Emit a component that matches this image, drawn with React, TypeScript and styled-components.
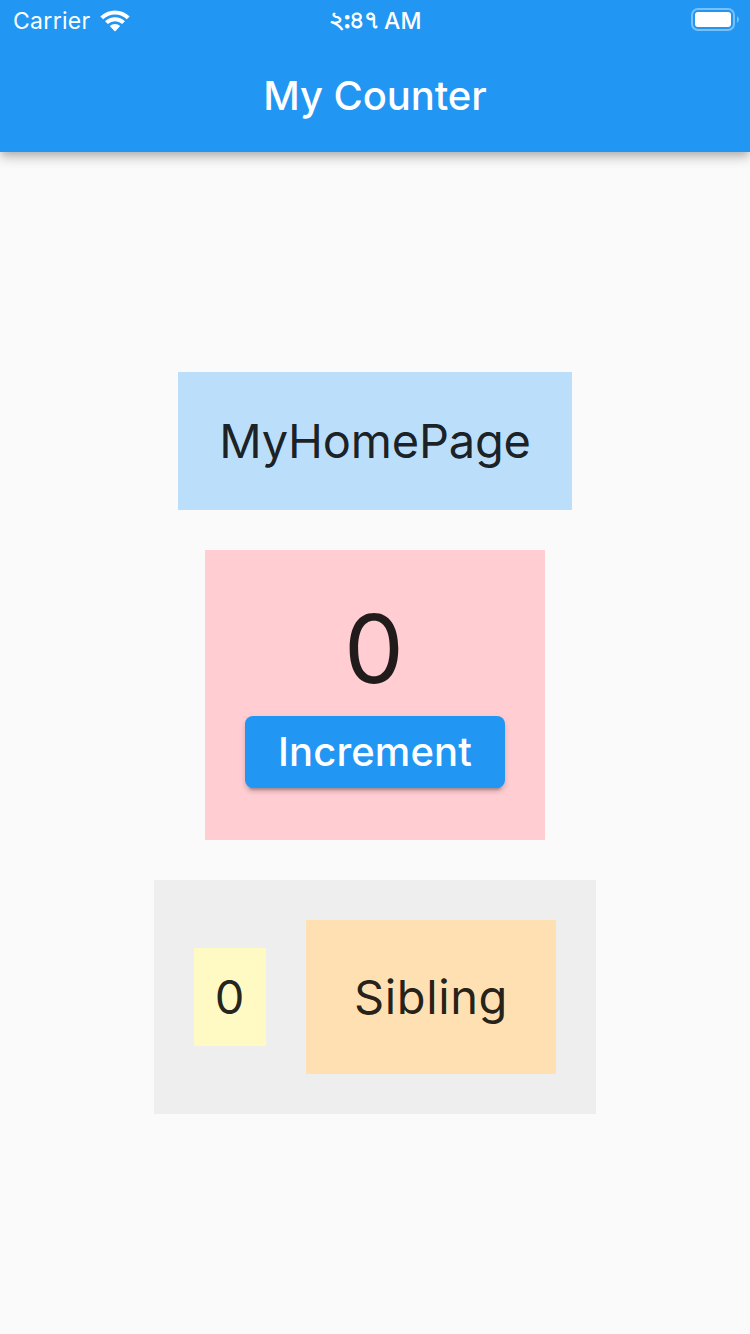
import React, { useState } from "react";
import styled, { createGlobalStyle } from "styled-components";

const GlobalStyle = createGlobalStyle`
  * { box-sizing: border-box; }
  body {
    margin: 0;
    background: #fafafa;
    color: rgba(0, 0, 0, 0.87);
    font-family: Inter, "Noto Sans", sans-serif;
  }
`;

const Screen = styled.div`
  display: flex;
  flex-direction: column;
  height: 1334px;
  width: 750px;
  overflow: hidden;
`;

const Header = styled.header`
  flex: none;
  height: 152px;
  background: #2196f3;
  color: #fff;
  box-shadow: 0 4px 8px -2px rgba(0, 0, 0, 0.2), 0 8px 10px rgba(0, 0, 0, 0.1),
    0 2px 16px rgba(0, 0, 0, 0.08);
`;

const StatusBar = styled.div`
  display: grid;
  grid-template-columns: 1fr auto 1fr;
  align-items: center;
  height: 40px;
  padding: 0 10px 0 13px;
`;

const Carrier = styled.div`
  display: flex;
  align-items: center;
  gap: 9px;
  font-size: 23px;
  line-height: 38px;
  letter-spacing: 0.3px;
  padding-top: 1px;
`;

const Clock = styled.time`
  display: flex;
  align-items: center;
  gap: 5px;
  padding-top: 2px;
  margin-right: 3px;
  font-size: 23px;
  line-height: 38px;
  font-weight: 530;
`;

const Digits = styled.span`
  font-size: 24px;
  line-height: 30px;
  padding-bottom: 2px;
  letter-spacing: -1.2px;
  -webkit-text-stroke: 0.9px #fff;
`;

const Battery = styled.svg`
  justify-self: end;
`;

const Title = styled.h1`
  margin: 0;
  height: 112px;
  line-height: 112px;
  text-align: center;
  font-size: 40px;
  font-weight: 550;
  letter-spacing: -0.1px;
`;

const Content = styled.main`
  flex: 1;
  display: flex;
  flex-direction: column;
  align-items: center;
  gap: 40px;
  padding-top: 220px;
`;

const Panel = styled.section<{ $color: string; $width: number; $height: number }>`
  display: flex;
  align-items: center;
  justify-content: center;
  width: ${(p) => p.$width}px;
  height: ${(p) => p.$height}px;
  background: ${(p) => p.$color};
`;

const CounterPanel = styled(Panel)`
  flex-direction: column;
  justify-content: flex-start;
  padding-top: 41px;
`;

const SiblingPanel = styled(Panel)`
  gap: 40px;
`;

const Label = styled.span<{ $spacing?: number }>`
  font-size: 47px;
  font-weight: 370;
  line-height: 58px;
  letter-spacing: ${(p) => p.$spacing ?? 0}px;
`;

const Count = styled.output`
  padding-right: 2px;
  font-size: 95px;
  font-weight: 370;
  line-height: 116px;
`;

const Button = styled.button`
  width: 260px;
  height: 72px;
  margin-top: 9px;
  padding: 0;
  border: 0;
  border-radius: 8px;
  background: #2196f3;
  color: #fff;
  font-family: Inter, sans-serif;
  font-size: 40px;
  font-weight: 550;
  line-height: 72px;
  letter-spacing: 0.1px;
  box-shadow: 0 6px 2px -4px rgba(0, 0, 0, 0.2), 0 4px 4px rgba(0, 0, 0, 0.12),
    0 2px 8px rgba(0, 0, 0, 0.06);
`;

export default function App() {
  const [count, setCount] = useState(0);
  return (
    <Screen>
      <GlobalStyle />
      <Header>
        <StatusBar>
          <Carrier>
            <span>Carrier</span>
            <svg width="30" height="22" viewBox="0 0 30 22" fill="#fff">
              <path d="M0.300 6.400Q6.500 0.400 15 0.400T29.700 6.400L26.800 9.300Q21.800 4.600 15 4.600T3.200 9.300Z" />
              <path d="M5 11.200Q9.300 7.200 15 7.200T25 11.200L22.100 14.100Q19 11.300 15 11.300T7.900 14.100Z" />
              <path d="M9.800 16.100Q12 14.100 15 14.100T20.200 16.100L15.600 20.900Q15 21.500 14.400 20.900Z" />
            </svg>
          </Carrier>
          <Clock>
            <Digits>২:৪৭</Digits>
            <span>AM</span>
          </Clock>
          <Battery width="49" height="24" viewBox="0 0 49 24" fill="none">
            <rect x="1" y="1" width="42" height="21" rx="6" stroke="#fff" strokeOpacity="0.4" strokeWidth="2" />
            <rect x="4" y="4" width="36" height="15" rx="3" fill="#fff" />
            <path d="M46 8Q50 11.500 46 15Z" fill="#fff" fillOpacity="0.4" />
          </Battery>
        </StatusBar>
        <Title>My Counter</Title>
      </Header>
      <Content>
        <Panel $color="#bbdefb" $width={394} $height={138}>
          <Label $spacing={-0.2}>MyHomePage</Label>
        </Panel>
        <CounterPanel $color="#ffcdd2" $width={340} $height={290}>
          <Count>{count}</Count>
          <Button onClick={() => setCount(count + 1)}>Increment</Button>
        </CounterPanel>
        <SiblingPanel $color="#eeeeee" $width={442} $height={234}>
          <Panel $color="#fff9c4" $width={72} $height={98}>
            <Label $spacing={1}>{count}</Label>
          </Panel>
          <Panel $color="#ffe0b2" $width={250} $height={154}>
            <Label $spacing={0.6}>Sibling</Label>
          </Panel>
        </SiblingPanel>
      </Content>
    </Screen>
  );
}
